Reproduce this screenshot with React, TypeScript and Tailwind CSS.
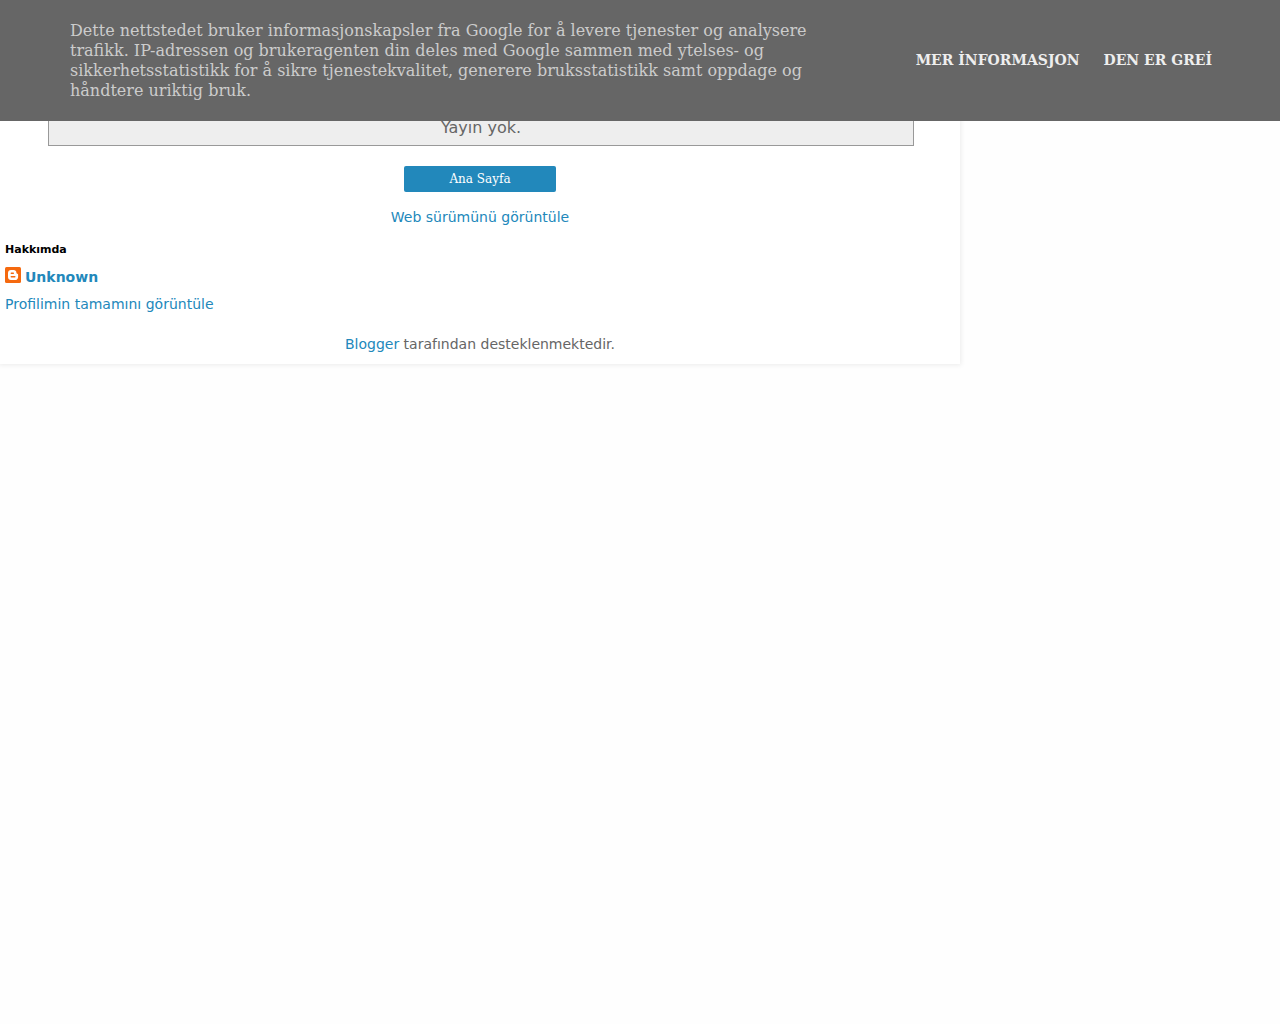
function BloggerIcon() {
  return (
    <svg viewBox="0 0 16 16" className="mr-1 size-4 shrink-0" aria-hidden="true">
      <rect width="16" height="16" rx="1.500" fill="#f5690f" />
      <path
        fill="#fff"
        fillRule="evenodd"
        d="M6 3h2.600C10.300 3 11.400 4.100 11.400 5.600c0 .8.2 1.100.9 1.100.5 0 .8.3.8.8v2.400C13.100 11.800 11.800 13 10 13H6C4.200 13 3 11.800 3 10V6c0-1.800 1.200-3 3-3zM6.300 5.500a.75.75 0 0 0 0 1.500H8.300a.75.75 0 0 0 0-1.500zM6.300 9a.75.75 0 0 0 0 1.500H9.800a.75.75 0 0 0 0-1.500z"
      />
    </svg>
  );
}

function CookieNotice() {
  return (
    <div className="fixed inset-x-0 top-0 z-10 flex min-h-[121px] items-center justify-between bg-[#666] px-[68px] pl-[70px] font-['DejaVu_Serif',serif]">
      <p className="w-2/3 text-base leading-5 text-[#ccc]">
        Dette nettstedet bruker informasjonskapsler fra Google for å levere tjenester og analysere
        trafikk. IP-adressen og brukeragenten din deles med Google sammen med ytelses- og
        sikkerhetsstatistikk for å sikre tjenestekvalitet, generere bruksstatistikk samt oppdage og
        håndtere uriktig bruk.
      </p>
      <div className="flex shrink-0 gap-6 pb-0.5 text-sm leading-5 font-bold text-[#eee]">
        <a href="#info">MER İNFORMASJON</a>
        <a href="#ok">DEN ER GREİ</a>
      </div>
    </div>
  );
}

export default function App() {
  return (
    <div className="min-h-screen bg-[#fefefe] font-['DejaVu_Sans',sans-serif] text-[#666]">
      <CookieNotice />
      <div className="w-3/4 bg-white pt-[109px] text-sm leading-5 shadow-[0_0_5px_1px_rgba(0,0,0,0.08)]">
        <main className="flex flex-col items-center">
          <div className="ml-[5%] box-content w-9/10 self-start border border-[#999] bg-[#eee] pt-2 pb-[7px] text-center text-base leading-5">
            Yayın yok.
          </div>
          <a
            href="#home"
            className="mt-5 w-38 rounded-xs bg-[#2288bb] text-center font-['DejaVu_Serif',serif] text-xs leading-[26px] text-white"
          >
            Ana Sayfa
          </a>
          <a href="#web" className="mt-[15px] text-[#2288bb]">
            Web sürümünü görüntüle
          </a>
        </main>
        <section className="px-[5px] pt-[17px]">
          <h2 className="text-[11px] leading-3 font-bold text-black">Hakkımda</h2>
          <a href="#profile" className="mt-[11px] flex font-bold text-[#2288bb]">
            <BloggerIcon />
            Unknown
          </a>
          <a href="#full-profile" className="mt-[7px] block text-[#2288bb]">
            Profilimin tamamını görüntüle
          </a>
        </section>
        <footer className="pt-5 pb-[10px] text-center">
          <a href="#blogger" className="text-[#2288bb]">
            Blogger
          </a>{" "}
          tarafından desteklenmektedir.
        </footer>
      </div>
    </div>
  );
}
